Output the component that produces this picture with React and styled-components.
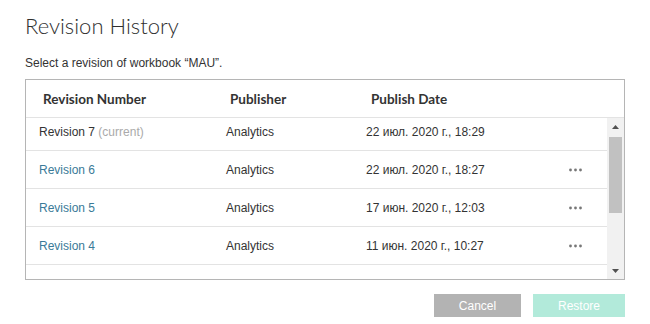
import React from 'react'
import styled, { createGlobalStyle } from 'styled-components'

const GlobalStyle = createGlobalStyle`
  html, body {
    margin: 0;
    padding: 0;
    background: #fff;
  }
  body {
    font-family: "Liberation Sans", Arial, sans-serif;
    color: #333;
  }
`

const Page = styled.div`
  width: 650px;
  height: 324px;
  padding: 13px 25px 0;
  box-sizing: border-box;
  display: flex;
  flex-direction: column;
`

const Title = styled.h1`
  margin: 0;
  font-family: Lato, "Liberation Sans", sans-serif;
  font-weight: 300;
  font-size: 22px;
  line-height: 26px;
  color: #2f2f2f;
`

const Subtitle = styled.p`
  margin: 17px 0 0;
  font-size: 12px;
  line-height: 14px;
  color: #333;
`

const Table = styled.div`
  margin-top: 9px;
  width: 600px;
  border: 1px solid #b5b5b5;
  box-sizing: border-box;
  display: flex;
  flex-direction: column;
`

const HeaderRow = styled.div`
  height: 37px;
  display: grid;
  grid-template-columns: 187px 141px 1fr;
  align-items: center;
  padding-left: 17px;
  border-bottom: 1px solid #e3e3e3;
  font-family: Lato, "Liberation Sans", sans-serif;
  font-weight: 700;
  font-size: 13.5px;
  color: #333;
`

const Body = styled.div`
  height: 161px;
  display: flex;
`

const Viewport = styled.div`
  flex: 1;
  overflow: hidden;
`

const Rows = styled.div`
  margin-top: ${p => -p.$scroll}px;
`

const Row = styled.div`
  height: 37px;
  display: grid;
  grid-template-columns: 187px 140px 203px 1fr;
  align-items: center;
  padding-left: 13px;
  border-bottom: 1px solid #e3e3e3;
  font-size: 12px;
  color: #333;
`

const RevName = styled.span`
  color: ${p => (p.$link ? '#3a7a98' : '#333')};
`

const Current = styled.span`
  color: #aaa;
`

const Dots = styled.svg`
  display: block;
`

const Scrollbar = styled.div`
  width: 17px;
  background: #f1f1f1;
  display: flex;
  flex-direction: column;
`

const ArrowButton = styled.div`
  height: 17px;
  display: flex;
  align-items: center;
  justify-content: center;
`

const Track = styled.div`
  flex: 1;
  padding: 2px 2px 0;
`

const Thumb = styled.div`
  height: 76px;
  background: #c1c1c1;
`

const Footer = styled.div`
  margin-top: 14px;
  width: 600px;
  display: flex;
  justify-content: flex-end;
  gap: 12px;
`

const Button = styled.button`
  width: ${p => p.$w}px;
  height: 23px;
  border: none;
  padding: 0;
  background: ${p => (p.$primary ? '#b2eada' : '#b3b3b3')};
  color: #fff;
  font-family: "Liberation Sans", Arial, sans-serif;
  font-size: 12px;
  cursor: pointer;
`

const revisions = [
  { name: 'Revision 7', current: true, date: '22 июл. 2020 г., 18:29' },
  { name: 'Revision 6', date: '22 июл. 2020 г., 18:27' },
  { name: 'Revision 5', date: '17 июн. 2020 г., 12:03' },
  { name: 'Revision 4', date: '11 июн. 2020 г., 10:27' },
  { name: 'Revision 3', date: '10 июн. 2020 г., 15:10' },
]

function MoreIcon () {
  return (
    <Dots width="14" height="4" viewBox="0 0 14 4">
      <circle cx="1.5" cy="2" r="1.4" fill="#777" />
      <circle cx="6.5" cy="2" r="1.4" fill="#777" />
      <circle cx="11.5" cy="2" r="1.4" fill="#777" />
    </Dots>
  )
}

function Arrow ({ down }) {
  return (
    <svg width="7" height="4" viewBox="0 0 7 4">
      <polygon points={down ? '0,0 7,0 3.5,4' : '0,4 7,4 3.5,0'} fill="#505050" />
    </svg>
  )
}

export default function App () {
  return (
    <Page>
      <GlobalStyle />
      <Title>Revision History</Title>
      <Subtitle>Select a revision of workbook “MAU”.</Subtitle>
      <Table>
        <HeaderRow>
          <span>Revision Number</span>
          <span>Publisher</span>
          <span>Publish Date</span>
        </HeaderRow>
        <Body>
          <Viewport>
            <Rows $scroll={5}>
              {revisions.map(r => (
                <Row key={r.name}>
                  <span>
                    <RevName $link={!r.current}>{r.name}</RevName>
                    {r.current && <Current> (current)</Current>}
                  </span>
                  <span>Analytics</span>
                  <span>{r.date}</span>
                  <span>{!r.current && <MoreIcon />}</span>
                </Row>
              ))}
            </Rows>
          </Viewport>
          <Scrollbar>
            <ArrowButton><Arrow /></ArrowButton>
            <Track><Thumb /></Track>
            <ArrowButton><Arrow down /></ArrowButton>
          </Scrollbar>
        </Body>
      </Table>
      <Footer>
        <Button $w={87}>Cancel</Button>
        <Button $w={92} $primary>Restore</Button>
      </Footer>
    </Page>
  )
}
